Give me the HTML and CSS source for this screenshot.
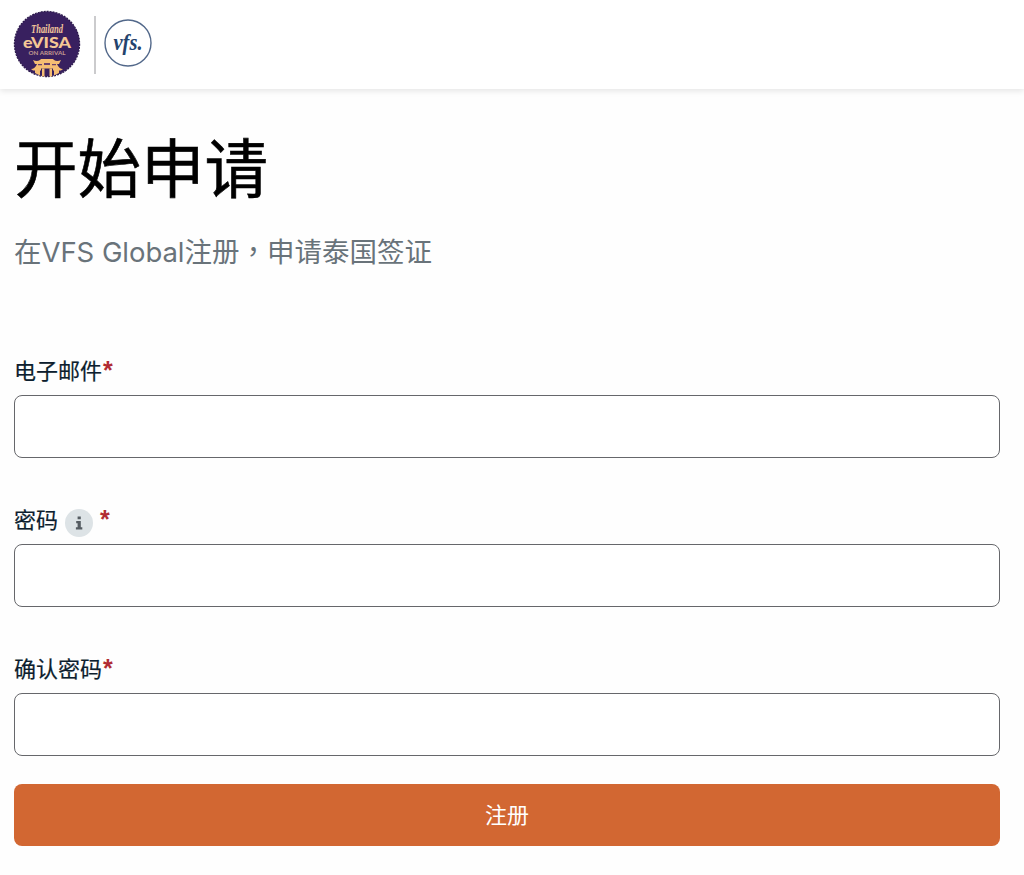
FILE: index.html
```
<!DOCTYPE html>
<html lang="zh-CN">

<head>
    <meta charset="UTF-8">
    <meta name="viewport" content="width=device-width, initial-scale=1.0">
    <title>开始申请</title>
    <link rel="stylesheet" href="styles.css">
</head>

<body>
    <header class="header">
        <svg class="logo-evisa" viewBox="0 0 68 68" role="img" aria-label="Thailand eVISA on arrival">
            <circle cx="34" cy="34" r="32.6" fill="#38205f" />
            <circle cx="34" cy="34" r="32.6" fill="none" stroke="#2c1a4b" stroke-width="1.2" stroke-dasharray="2 1" />
            <text class="evisa-script" x="34" y="23" textLength="32" lengthAdjust="spacingAndGlyphs">Thailand</text>
            <text class="evisa-name" x="34" y="37.500" textLength="48" lengthAdjust="spacingAndGlyphs">eVISA</text>
            <text class="evisa-sub" x="34" y="44.800" textLength="37" lengthAdjust="spacingAndGlyphs">ON ARRIVAL</text>
            <!-- 城门 -->
            <g fill="#f5bd73">
                <path d="M20 50q4 2 7 0l1-1h12l1 1q3 2 7 0l-2 4h-24z" />
                <path d="M18 59q4 0 6-5h20q2 5 6 5l-2 1.500h-8v-2h-12v2h-8z" />
                <path d="M22 60h5v5.500l-5-2.500zM41 60h5v3l-5 2.500zM29 58.500h2.500v8h-2.500zM36.500 58.500h2.500v8h-2.500z" />
            </g>
            <path d="M25 54h4v1.200h-4zM31 53h6v2h-6zM39 54h4v1.200h-4z" fill="#6b416b" />
        </svg>
        <span class="divider"></span>
        <svg class="logo-vfs" viewBox="0 0 48 48" role="img" aria-label="vfs.">
            <circle cx="24" cy="24" r="23" fill="#fff" stroke="#52688a" stroke-width="1.4" />
            <text class="vfs-name" x="24" y="31" textLength="29" lengthAdjust="spacingAndGlyphs">vfs.</text>
        </svg>
    </header>

    <main class="container">
        <h1>开始申请</h1>
        <p class="subtitle">在<span class="latin">VFS Global</span>注册<span class="comma" lang="zh-TW">，</span>申请泰国签证</p>

        <form class="form">
            <div class="field">
                <label for="email">电子邮件<span class="required">*</span></label>
                <input type="email" id="email">
            </div>
            <div class="field">
                <label for="password">密码
                    <svg class="info" viewBox="0 0 28 28">
                        <circle cx="14" cy="14" r="14" fill="#dde3e6" />
                        <path d="M12.600 7.500h3.200v2.700h-3.200zM11.200 12h4.600v6.200h1.500v2.200h-6.400v-2.200h1.700v-4h-1.400z" fill="#555c62" />
                    </svg>
                    <span class="required">*</span>
                </label>
                <input type="password" id="password">
            </div>
            <div class="field">
                <label for="confirm">确认密码<span class="required">*</span></label>
                <input type="password" id="confirm">
            </div>
            <button type="button" class="submit">注册</button>
        </form>
    </main>
</body>

</html>
```

FILE: styles.css
```
* {
    margin: 0;
    padding: 0;
    box-sizing: border-box;
}

body {
    min-height: 100vh;
    background: #fefefe;
    color: #0d1e2e;
    font-family: Inter, "Noto Sans CJK SC", sans-serif;
}

.header {
    display: flex;
    align-items: center;
    height: 89px;
    padding-left: 13px;
    background: #fff;
    box-shadow: 0 2px 6px rgba(0, 0, 0, 0.1);
}

.logo-evisa {
    width: 68px;
    height: 68px;
    margin-bottom: 2px;
}

.divider {
    width: 2px;
    height: 58px;
    margin: 0 8px 0 13px;
    background: #cbcbcd;
}

.logo-vfs {
    width: 48px;
    height: 48px;
    margin-bottom: 3px;
}

.evisa-script,
.evisa-name,
.evisa-sub,
.vfs-name {
    text-anchor: middle;
}

.evisa-script {
    fill: #f3c69b;
    font: italic bold 11.500px "Liberation Serif", serif;
}

.evisa-name {
    fill: #f5c795;
    font: 900 15px Lato, sans-serif;
}

.evisa-sub {
    fill: #c39a91;
    font: bold 6px Lato, sans-serif;
}

.vfs-name {
    fill: #24436d;
    font: italic bold 24px "Liberation Serif", serif;
}

.container {
    padding: 36px 24px 0 14px;
}

h1 {
    height: 88px;
    color: #000;
    font-size: 63.500px;
    font-weight: 400;
    line-height: 88px;
    -webkit-text-stroke: 0.6px #000;
}

.subtitle {
    height: 40px;
    margin-top: 17px;
    color: #69737a;
    font-size: 27.500px;
    line-height: 40px;
}

.subtitle .latin {
    letter-spacing: -0.05px;
}

.subtitle .comma {
    font-family: "Noto Sans CJK TC", sans-serif;
}

.form {
    margin-top: 83px;
}

.field {
    height: 149px;
}

.field label {
    display: flex;
    align-items: center;
    height: 36px;
    margin-bottom: 6px;
    font-size: 22px;
    line-height: 36px;
    -webkit-text-stroke: 0.2px;
}

.field input {
    display: block;
    width: 100%;
    height: 63px;
    padding: 0 16px;
    border: 1px solid #66676b;
    border-radius: 8px;
    background: #fff;
    font: inherit;
    font-size: 22px;
}

.required {
    margin: -3px 0 0 1px;
    color: #b12c33;
    font-family: "Liberation Sans", sans-serif;
    font-size: 25px;
    font-weight: 700;
    -webkit-text-stroke: 0;
}

.info {
    width: 28px;
    height: 28px;
    margin: 5px 6px 0 7px;
}

.submit {
    display: block;
    width: 100%;
    height: 62px;
    margin-top: -16px;
    padding-bottom: 5px;
    border: 0;
    border-radius: 8px;
    background: #d26732;
    color: #fff;
    font: inherit;
    font-size: 22px;
}
```
